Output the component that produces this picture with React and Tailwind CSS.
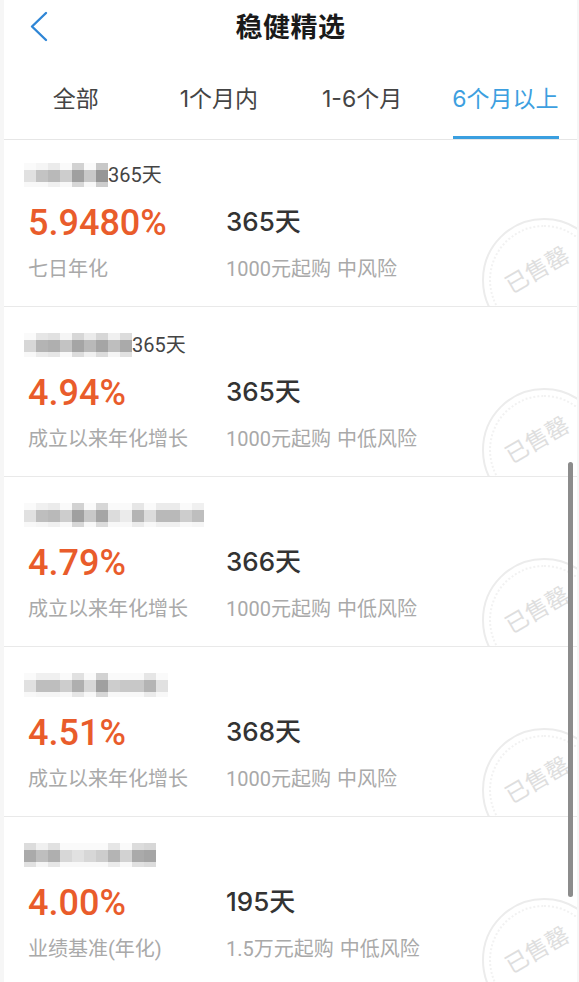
import React from 'react';

const tabs = ['全部', '1个月内', '1-6个月', '6个月以上'];

const products = [
  { cells: [225, 195, 185, 205, 160, 200, 150], suffix: '365天', rate: '5.9480%', rateLabel: '七日年化', term: '365天', amount: '1000元起购', risk: '中风险' },
  { cells: [215, 180, 175, 195, 165, 185, 165, 190, 170], suffix: '365天', rate: '4.94%', rateLabel: '成立以来年化增长', term: '365天', amount: '1000元起购', risk: '中低风险' },
  { cells: [225, 190, 185, 205, 160, 200, 165, 220, 235, 180, 220, 185, 185, 205, 190], rate: '4.79%', rateLabel: '成立以来年化增长', term: '366天', amount: '1000元起购', risk: '中低风险' },
  { cells: [225, 190, 190, 205, 175, 215, 160, 205, 200, 200, 180, 225], rate: '4.51%', rateLabel: '成立以来年化增长', term: '368天', amount: '1000元起购', risk: '中风险' },
  { cells: [170, 190, 175, 215, 225, 215, 205, 180, 210, 170, 165], rate: '4.00%', rateLabel: '业绩基准(年化)', term: '195天', amount: '1.5万元起购', risk: '中低风险' },
];

// pixelated name block
const Mosaic = ({ cells }) => (
  <svg width={cells.length * 12} height="26" className="shrink-0 -my-1">
    {cells.map((g, i) => (
      <g key={i}>
        <rect x={i * 12} y="1" width="12" height="7" fill={`rgb(${Math.min(g + 50, 250)},${Math.min(g + 50, 250)},${Math.min(g + 50, 250)})`} />
        <rect x={i * 12} y="8" width="12" height="12" fill={`rgb(${g},${g},${g})`} />
        <rect x={i * 12} y="20" width="12" height="5" fill={`rgb(${Math.min(g + 55, 248)},${Math.min(g + 55, 248)},${Math.min(g + 55, 248)})`} />
      </g>
    ))}
  </svg>
);

const Stamp = ({ first }) => (
  <div className={`absolute left-[478px] flex h-[124px] w-[124px] items-center justify-center rounded-full border-2 border-[#ececec] ${first ? 'top-[78px]' : 'top-[81px]'}`}>
    <div className="flex h-[110px] w-[110px] items-center justify-center rounded-full border-2 border-dotted border-[#f2f2f2]">
      <span className="-translate-x-[7px] -translate-y-[10px] -rotate-[30deg] whitespace-nowrap text-[23px] leading-none text-[#dedede]">已售罄</span>
    </div>
  </div>
);

const ProductRow = ({ item, first }) => (
  <div className={`relative overflow-hidden border-b border-[#e9e9e9] ${first ? 'h-[167px] pt-[22px]' : 'h-[170px] pt-[25px]'}`}>
    <div className="flex h-[26px] items-center pl-5 font-['Roboto','Noto_Sans_CJK_SC',sans-serif] text-[20px] leading-none text-[#444]">
      <Mosaic cells={item.cells} />
      {item.suffix && <span>{item.suffix}</span>}
    </div>
    <div className="mt-[13px] flex items-center pl-6">
      <div className="w-[198px] font-['Roboto','Noto_Sans_CJK_SC',sans-serif] text-[36px] font-medium leading-[44px] text-[#e95c2b]">{item.rate}</div>
      <div className="-translate-y-px text-[26px] font-medium leading-[40px] text-[#333]">{item.term}</div>
    </div>
    <div className="mt-[10px] flex items-center pl-6 font-['Roboto','Noto_Sans_CJK_SC',sans-serif] text-[20px] leading-[28px] text-[#a9a9a9]">
      <div className="w-[198px]">{item.rateLabel}</div>
      <div className="flex gap-1.5">
        <span>{item.amount}</span>
        <span>{item.risk}</span>
      </div>
    </div>
    <Stamp first={first} />
  </div>
);

export default function App() {
  return (
    <div className="relative h-[982px] w-[579px] overflow-hidden bg-white font-['Inter','Noto_Sans_CJK_SC',sans-serif]">
      <div className="ml-1 mr-0.5 bg-white">
        {/* Header */}
        <div className="relative flex h-[54px] items-center justify-center">
          <svg className="absolute left-[22px] top-[10px]" width="26" height="32" viewBox="0 0 26 32" fill="none">
            <path d="M20 3 L6 16.5 L20 30" stroke="#2f86d6" strokeWidth="2.4" strokeLinecap="round" strokeLinejoin="round" />
          </svg>
          <h1 className="text-[27px] font-bold leading-none tracking-[0.5px] text-[#1a1a1a]">稳健精选</h1>
        </div>

        {/* Tabs */}
        <div className="grid h-[86px] grid-cols-4 border-b border-[#e6e6e6]">
          {tabs.map((tab, i) => (
            <div key={tab} className="relative flex items-center justify-center pt-[6px]">
              <span className={`whitespace-nowrap text-[23px] leading-none ${i === 3 ? 'text-[#3d9fe0]' : 'text-[#444]'}`}>{tab}</span>
              {i === 3 && <div className="absolute bottom-0 left-[19px] h-[3px] w-[106px] bg-[#3a9fe0]" />}
            </div>
          ))}
        </div>

        {/* List */}
        {products.map((item, i) => (
          <ProductRow key={i} item={item} first={i === 0} />
        ))}
      </div>

      {/* side edges */}
      <div className="absolute inset-y-0 left-0 w-1 bg-[#f6f6f6]" />
      <div className="absolute inset-y-0 right-0 w-0.5 bg-[#f6f6f6]" />
      {/* scroll bar */}
      <div className="absolute left-[568px] top-[462px] h-[435px] w-[5px] rounded-full bg-[#8c8c8c]" />
    </div>
  );
}
